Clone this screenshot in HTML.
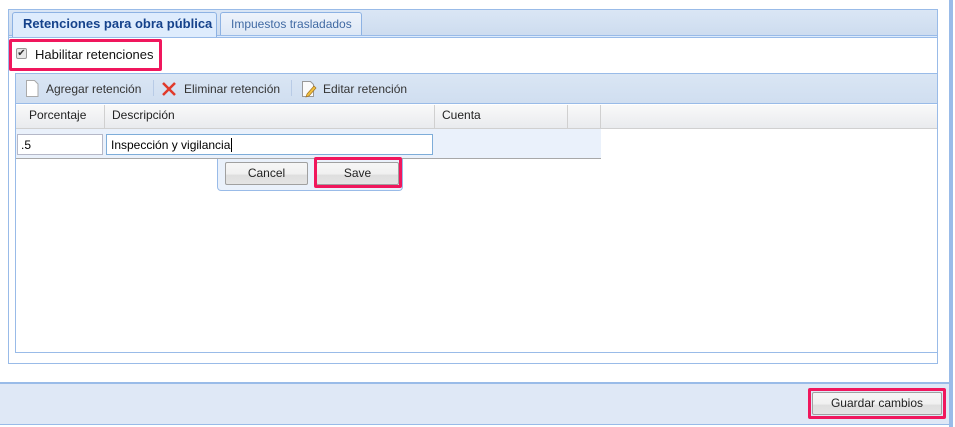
<!DOCTYPE html>
<html><head><style>
*{box-sizing:border-box;margin:0;padding:0}
body{width:955px;height:427px;background:#fff;font-family:"Liberation Sans",Arial,sans-serif;font-size:12px;color:#000;position:relative;overflow:hidden}
.a{position:absolute}
.btn{position:absolute;border:1px solid #a0a0a0;border-radius:2px;background:linear-gradient(#f6f6f6 0,#f0f0f0 55%,#dedede 56%,#e4e4e4);text-align:center;font-size:12px;color:#222}
.hl{position:absolute;border:3px solid #f0175d;border-radius:2px}
</style></head><body>
<div class="a" style="left:949px;top:0;width:4px;height:427px;background:#99bbe8"></div>
<div class="a" style="left:8px;top:9px;width:930px;height:355px;border:1px solid #99bbe8"></div>
<div class="a" style="left:9px;top:10px;width:928px;height:26px;background:linear-gradient(#dae6f5,#cddcef)"></div>
<div class="a" style="left:9px;top:35px;width:928px;height:3px;border-top:1px solid #99bbe8;border-bottom:1px solid #99bbe8;background:#deecfd"></div>
<div class="a" style="left:12px;top:12px;width:205px;height:25px;background:#deecfd;border:1px solid #8db2e3;border-bottom:none;border-radius:3px 3px 0 0;font-weight:bold;color:#15428b;font-size:13px;padding:3px 0 0 10px">Retenciones para obra pública</div>
<div class="a" style="left:220px;top:12px;width:142px;height:23px;background:linear-gradient(#eef3fb,#dde8f6);border:1px solid #8db2e3;border-bottom:none;border-radius:3px 3px 0 0;color:#416aa3;font-size:12px;padding:4px 0 0 10px">Impuestos trasladados</div>
<div class="a" style="left:16px;top:48px;width:11px;height:11px;border:1px solid #999;border-radius:2px;background:#e8e8e8;font-size:10px;line-height:9px;text-align:center;color:#333">✔</div>
<div class="a" style="left:35px;top:47px;font-size:13px;color:#111">Habilitar retenciones</div>
<div class="hl" style="left:9px;top:39px;width:153px;height:32px"></div>
<div class="a" style="left:15px;top:73px;width:923px;height:280px;border:1px solid #99bbe8"></div>
<div class="a" style="left:16px;top:74px;width:921px;height:30px;background:linear-gradient(#dae6f4,#d0def0);border-bottom:1px solid #99bbe8"></div>
<svg class="a" style="left:25px;top:80px" width="14" height="17"><path d="M1.5 .5h8l3.5 3.5v12.5h-11.5z" fill="#fff" stroke="#aaa"/></svg>
<div class="a" style="left:46px;top:82px;color:#333">Agregar retención</div>
<div class="a" style="left:153px;top:80px;width:1px;height:16px;background:#b8cbe6"></div>
<svg class="a" style="left:161px;top:81px" width="16" height="16"><path d="M2 2L14 14M14 2L2 14" stroke="#e03a2a" stroke-width="2.5"/></svg>
<div class="a" style="left:184px;top:82px;color:#333">Eliminar retención</div>
<div class="a" style="left:291px;top:80px;width:1px;height:16px;background:#b8cbe6"></div>
<svg class="a" style="left:301px;top:80px" width="16" height="18"><path d="M1.5 1.5h8l3 3v12h-11z" fill="#fafafa" stroke="#999"/><path d="M6 14l7-8 2 2-7 8-3 1z" fill="#f0c040" stroke="#a07020" stroke-width=".7"/></svg>
<div class="a" style="left:323px;top:82px;color:#333">Editar retención</div>
<div class="a" style="left:16px;top:105px;width:921px;height:24px;background:linear-gradient(#f9f9f9,#e9ebee);border-bottom:1px solid #d0d0d0"></div>
<div class="a" style="left:104px;top:105px;width:1px;height:24px;background:#d0d0d0"></div>
<div class="a" style="left:434px;top:105px;width:1px;height:24px;background:#d0d0d0"></div>
<div class="a" style="left:567px;top:105px;width:1px;height:24px;background:#d0d0d0"></div>
<div class="a" style="left:600px;top:105px;width:1px;height:24px;background:#d0d0d0"></div>
<div class="a" style="left:29px;top:108px;color:#222">Porcentaje</div>
<div class="a" style="left:112px;top:108px;color:#222">Descripción</div>
<div class="a" style="left:442px;top:108px;color:#222">Cuenta</div>
<div class="a" style="left:16px;top:129px;width:585px;height:30px;background:#eaf1fb;border-bottom:1px solid #a8a8a8"></div>
<div class="a" style="left:17px;top:134px;width:86px;height:21px;border:1px solid #b5b8c8;background:#fff;padding:3px 3px">.5</div>
<div class="a" style="left:106px;top:134px;width:327px;height:21px;border:1px solid #7eadd9;background:#fff;padding:3px 4px">Inspección y vigilancia<span style="border-left:1px solid #000;margin-left:1px"></span></div>
<div class="a" style="left:217px;top:159px;width:186px;height:32px;background:#eaf1fb;border:1px solid #99bbe8;border-top:none;border-radius:0 0 4px 4px"></div>
<div class="btn" style="left:225px;top:162px;width:83px;height:23px;line-height:21px">Cancel</div>
<div class="btn" style="left:316px;top:162px;width:83px;height:23px;line-height:21px">Save</div>
<div class="hl" style="left:314px;top:157px;width:88px;height:31px"></div>
<div class="a" style="left:0;top:382px;width:949px;height:43px;background:#dfe8f6;border-top:2px solid #99bbe8;border-bottom:1px solid #99bbe8"></div>
<div class="btn" style="left:812px;top:392px;width:130px;height:23px;line-height:21px;font-size:12px">Guardar cambios</div>
<div class="hl" style="left:808px;top:388px;width:138px;height:31px"></div>
</body></html>
